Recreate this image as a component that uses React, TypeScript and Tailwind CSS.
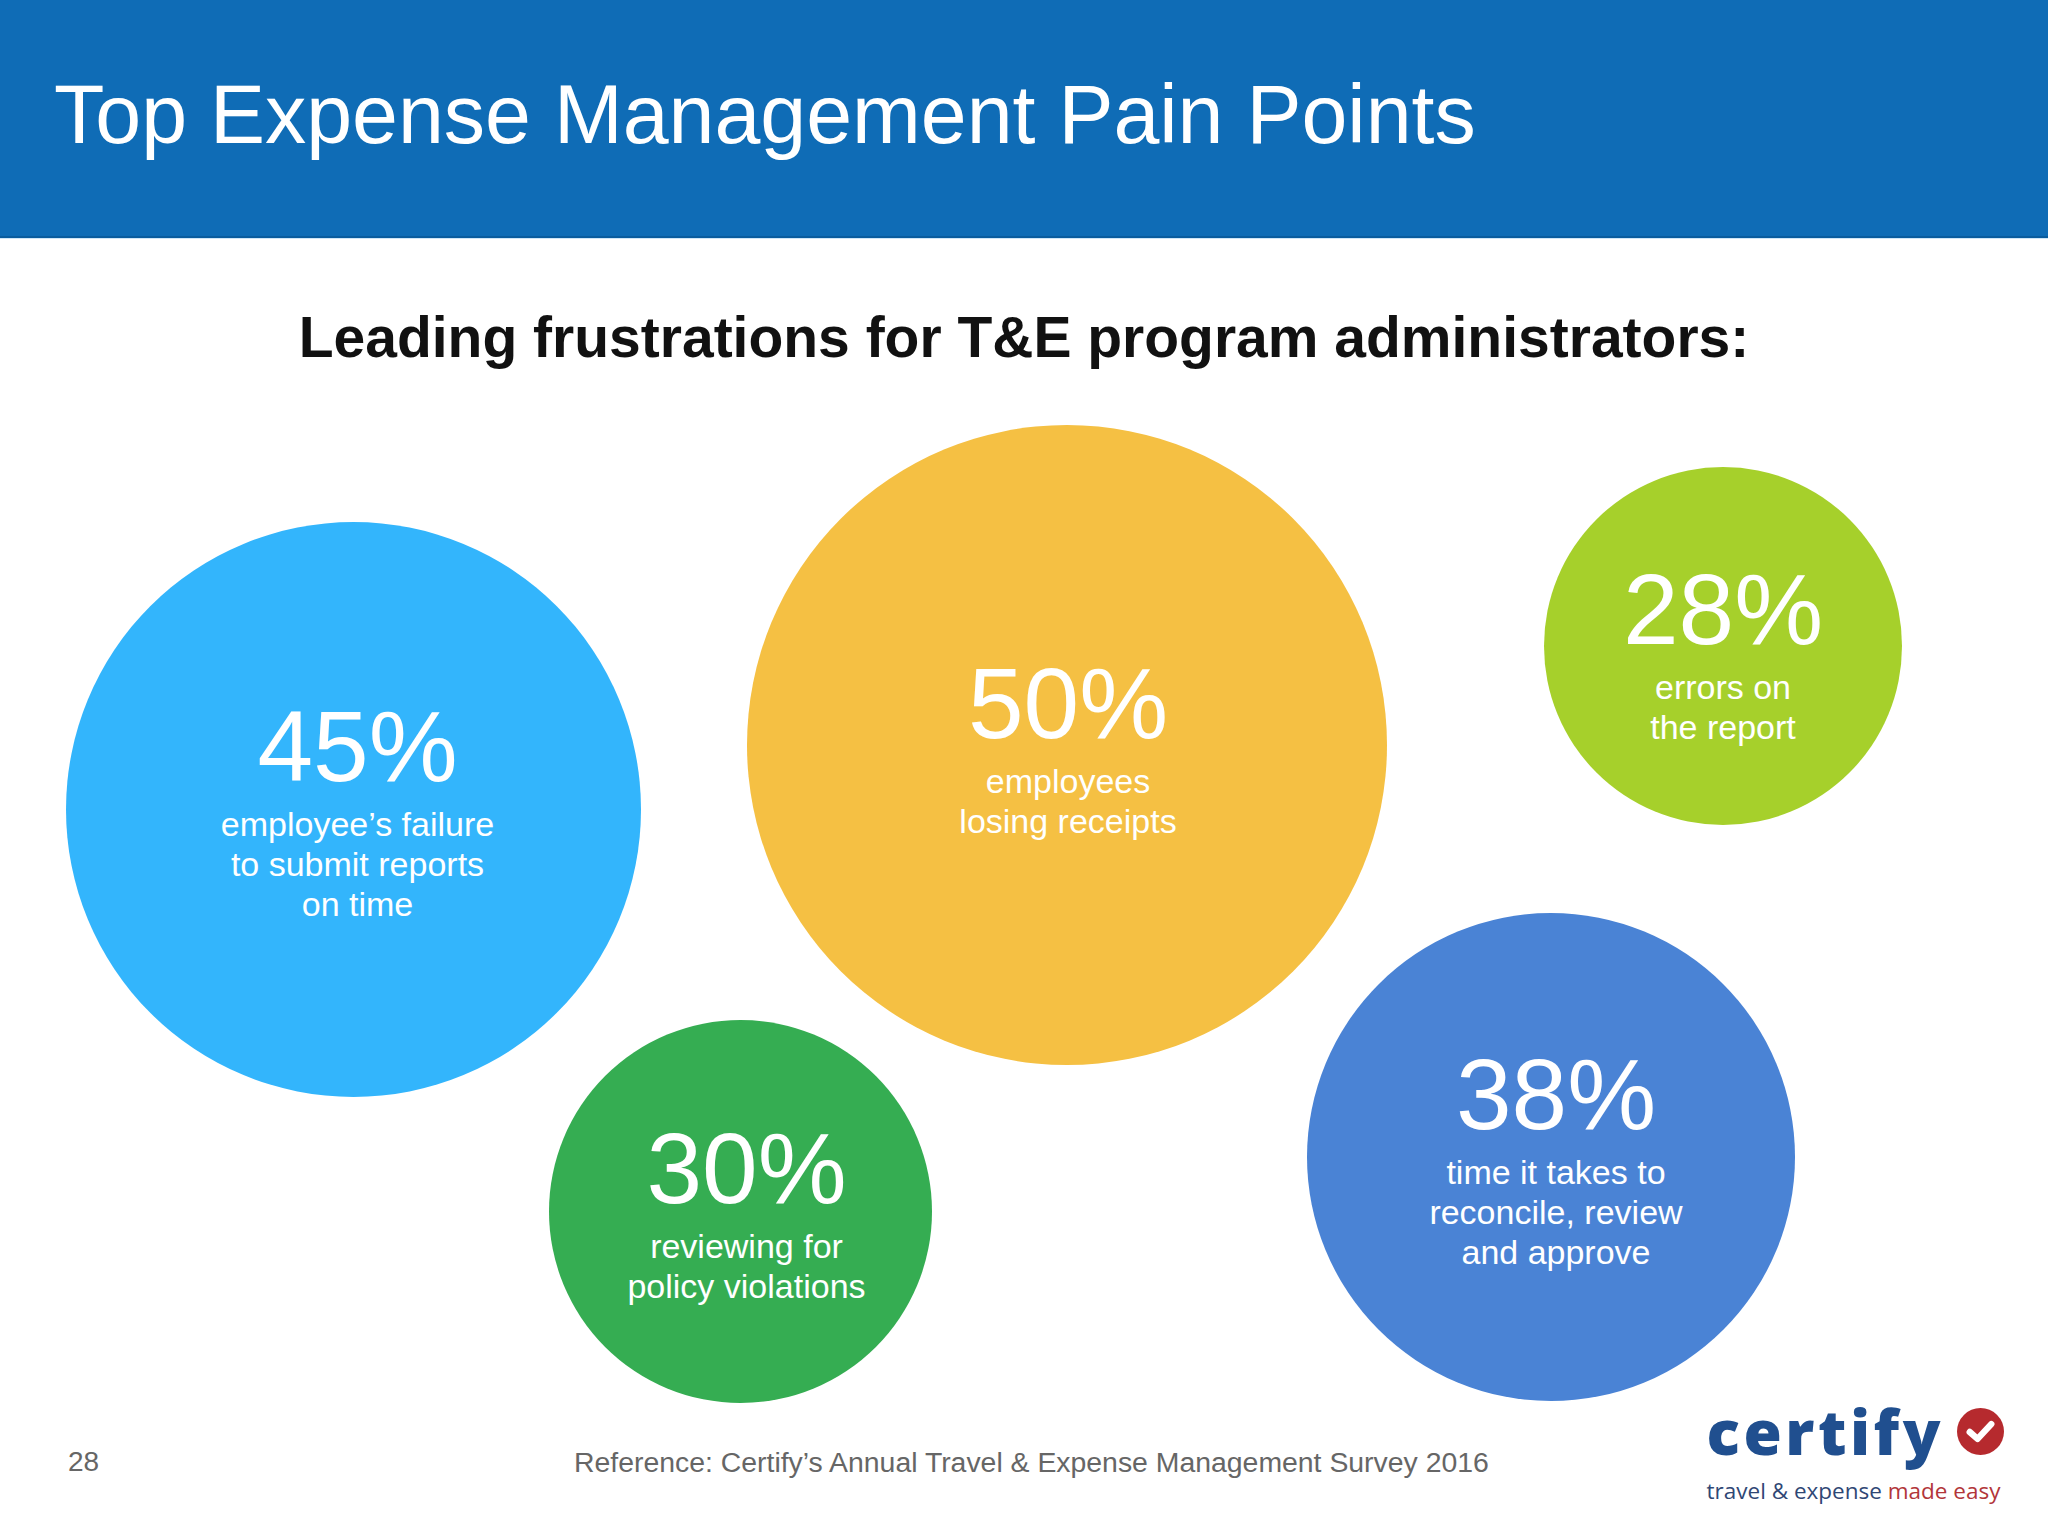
import { FC } from 'react'

type Bubble = {
  value: string
  lines: string[]
  className: string
}

// circle position + a small nudge of the text block where the slide has it off-centre
const bubbles: Bubble[] = [
  {
    value: '45%',
    lines: ['employee’s failure', 'to submit reports', 'on time'],
    className: 'left-[66px] top-[283px] size-[575px] bg-[#33b5fc] pl-[8px]',
  },
  {
    value: '50%',
    lines: ['employees', 'losing receipts'],
    className: 'left-[747px] top-[186px] size-[640px] bg-[#f5c043] pl-[2px] pt-[4px]',
  },
  {
    value: '28%',
    lines: ['errors on', 'the report'],
    className: 'left-[1544px] top-[228px] size-[358px] bg-[#a6d02b] pt-[14px]',
  },
  {
    value: '30%',
    lines: ['reviewing for', 'policy violations'],
    className: 'left-[549px] top-[781px] size-[383px] bg-[#35ad52] pl-[12px]',
  },
  {
    value: '38%',
    lines: ['time it takes to', 'reconcile, review', 'and approve'],
    className: 'left-[1307px] top-[674px] size-[488px] bg-[#4a83d5] pl-[10px] pt-[2px]',
  },
]

const StatBubble: FC<{ bubble: Bubble }> = ({ bubble }) => (
  <div
    className={`absolute flex flex-col items-center justify-center rounded-full text-center text-white ${bubble.className}`}
  >
    <div className="text-[100px] leading-none">{bubble.value}</div>
    <div className="mt-[8px] text-[34px] leading-[40px]">
      {bubble.lines.map((line) => (
        <div key={line}>{line}</div>
      ))}
    </div>
  </div>
)

const CertifyLogo: FC = () => (
  <div className="flex flex-col font-['Open_Sans',sans-serif]">
    <div className="flex items-center">
      <span className="text-[62px] font-extrabold leading-none tracking-[3.5px] text-[#204f8f]">
        certify
      </span>
      <svg className="ml-[13px] size-[47px]" viewBox="0 0 48 48">
        <circle cx="24" cy="24" r="24" fill="#b62a2e" />
        <path
          d="M13 24.5 L21 31.5 L35 16.5"
          fill="none"
          stroke="#fff"
          strokeWidth="6.5"
          strokeLinecap="round"
          strokeLinejoin="round"
        />
      </svg>
    </div>
    <div className="mt-[18px] text-[22.5px] leading-none">
      <span className="text-[#2f4775]">travel &amp; expense </span>
      <span className="text-[#b2363a]">made easy</span>
    </div>
  </div>
)

export default function App() {
  return (
    <div className="flex h-[1536px] w-[2048px] flex-col overflow-hidden bg-white font-['Liberation_Sans',Arial,sans-serif]">
      <header className="h-[238px] flex-none border-b-2 border-[#0a5c9e] bg-[#0f6cb6] pl-[54px] pt-[73px]">
        <h1 className="text-[82.5px] leading-none text-white">
          Top Expense Management Pain Points
        </h1>
      </header>
      <div className="h-px flex-none bg-[#cfe6f7]" />

      <main className="relative h-[1161px] flex-none">
        <h2 className="pt-[70px] text-center text-[57px] font-bold leading-none text-[#111]">
          Leading frustrations for T&amp;E program administrators:
        </h2>
        {bubbles.map((bubble) => (
          <StatBubble key={bubble.value} bubble={bubble} />
        ))}
      </main>

      <footer className="flex flex-auto items-start pl-[68px] pr-[44px]">
        <div className="mt-[48px] w-[506px] text-[28px] leading-none text-[#666]">
          28
        </div>
        <div className="mt-[48px] text-[28.4px] leading-none text-[#666]">
          Reference: Certify’s Annual Travel &amp; Expense Management Survey 2016
        </div>
        <div className="ml-auto">
          <CertifyLogo />
        </div>
      </footer>
    </div>
  )
}
